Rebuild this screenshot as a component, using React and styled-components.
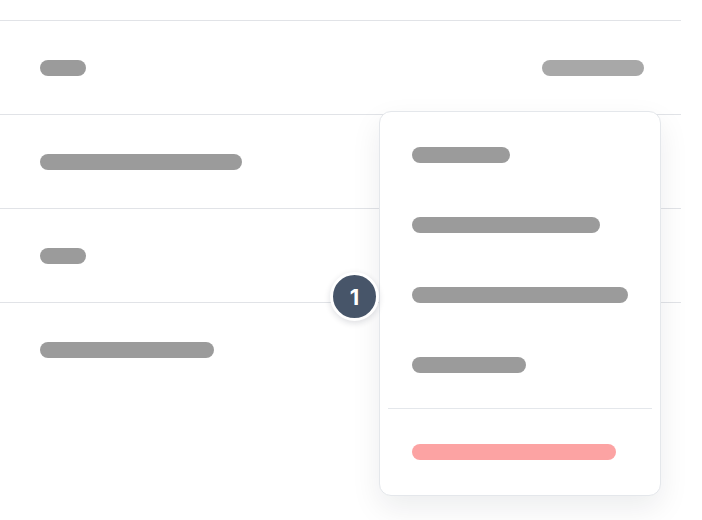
import styled, { createGlobalStyle } from "styled-components";

const GlobalStyle = createGlobalStyle`
  html, body {
    margin: 0;
    padding: 0;
    background: #ffffff;
    font-family: "Inter", "Liberation Sans", sans-serif;
  }
`;

const rows = [
  { left: 46, right: 102 },
  { left: 202 },
  { left: 46 },
  { left: 174 },
];

const menuItems = [98, 188, 216, 114];

function App() {
  return (
    <>
      <GlobalStyle />
      <Page>
        <Table>
          {rows.map((row, i) => (
            <Row key={i}>
              <Bar $w={row.left} />
              {row.right && <Bar $w={row.right} $light />}
            </Row>
          ))}
        </Table>
        <Badge>1</Badge>
        <Menu>
          {menuItems.map((w, i) => (
            <MenuItem key={i}>
              <Bar $w={w} />
            </MenuItem>
          ))}
          <Divider />
          <MenuItem>
            <Bar $w={204} $danger />
          </MenuItem>
        </Menu>
      </Page>
    </>
  );
}

const Page = styled.div`
  position: relative;
  width: 702px;
  height: 520px;
  padding-top: 20px;
  box-sizing: border-box;
  overflow: hidden;
`;

const Table = styled.div`
  width: 681px;
  display: flex;
  flex-direction: column;
`;

const Row = styled.div`
  height: 93px;
  border-top: 1px solid #e1e3e7;
  display: flex;
  align-items: center;
  justify-content: space-between;
  padding: 0 37px 0 40px;
`;

const Bar = styled.div`
  width: ${(p) => p.$w}px;
  height: 16px;
  border-radius: 8px;
  background: ${(p) => (p.$danger ? "#fca3a3" : p.$light ? "#a8a8a8" : "#9b9b9b")};
`;

const Badge = styled.div`
  position: absolute;
  left: 330px;
  top: 272px;
  width: 43px;
  height: 43px;
  border-radius: 50%;
  background: #475569;
  border: 3px solid #ffffff;
  box-shadow: 0 2px 6px rgba(15, 23, 42, 0.14);
  color: #ffffff;
  font-size: 22px;
  font-weight: 700;
  display: flex;
  align-items: center;
  justify-content: center;
  z-index: 2;
`;

const Menu = styled.div`
  position: absolute;
  left: 379px;
  top: 111px;
  width: 282px;
  box-sizing: border-box;
  padding: 8px;
  background: #ffffff;
  border: 1px solid #e4e7eb;
  border-radius: 12px;
  box-shadow: 0 12px 30px rgba(15, 23, 42, 0.08);
  display: flex;
  flex-direction: column;
`;

const MenuItem = styled.div`
  height: 70px;
  display: flex;
  align-items: center;
  padding-left: 24px;
`;

const Divider = styled.div`
  height: 1px;
  margin: 8px 0;
  background: #e4e7eb;
`;

export default App;
